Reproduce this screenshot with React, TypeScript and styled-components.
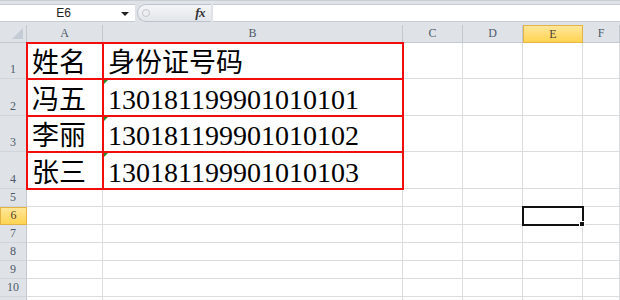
import React from "react";
import styled, { createGlobalStyle, css } from "styled-components";

const Global = createGlobalStyle`
  html, body { margin: 0; padding: 0; background: #fff; overflow: hidden; }
  #root { width: 620px; height: 300px; overflow: hidden; }
`;

const Window = styled.div`
  width: 620px;
  height: 300px;
  display: flex;
  flex-direction: column;
  overflow: hidden;
  font-family: "Liberation Sans", Arial, sans-serif;
`;

const FormulaBar = styled.div`
  height: 25px;
  box-sizing: border-box;
  padding: 3px 0 3px 0;
  background: #dfe3e8;
  border-top: 1px solid #c9ced5;
  display: flex;
  gap: 2px;
  align-items: stretch;
`;

const NameBox = styled.div`
  width: 135px;
  box-sizing: border-box;
  background: #fff;
  border-top: 1px solid #c6ccd4;
  border-bottom: 1px solid #c6ccd4;
  display: flex;
  align-items: center;
  padding: 0 6px 0 0;
`;

const NameText = styled.span`
  flex: 1;
  text-align: center;
  font-family: "Liberation Sans", Arial, sans-serif;
  font-size: 12px;
  color: #222;
  padding-left: 6px;
`;

const DropArrow = styled.span`
  width: 0;
  height: 0;
  border-left: 4px solid transparent;
  border-right: 4px solid transparent;
  border-top: 4px solid #222;
  margin-top: 1px;
`;

const FxPill = styled.div`
  width: 74px;
  box-sizing: border-box;
  border: 1px solid #bcc3cc;
  border-right: none;
  border-radius: 9px 0 0 9px;
  background: linear-gradient(#f4f5f7, #e3e6ea);
  display: flex;
  align-items: center;
  justify-content: space-between;
  padding: 0 6px 0 4px;
`;

const Grip = styled.span`
  width: 6px;
  height: 6px;
  border-radius: 50%;
  border: 1px solid #c3c8cf;
  background: #eceef1;
`;

const Fx = styled.span`
  font-family: "Liberation Serif", "Times New Roman", serif;
  font-style: italic;
  font-weight: bold;
  font-size: 13px;
  color: #333;
  letter-spacing: -0.5px;
`;

const FormulaInput = styled.div`
  flex: 1;
  background: #fff;
  border-top: 1px solid #c6ccd4;
  border-bottom: 1px solid #c6ccd4;
`;

const Sheet = styled.div`
  display: grid;
  grid-template-columns: 27px 76px 300px 60px 60px 60px 1fr;
  grid-template-rows: 18px 36px 37px 36px 37px repeat(7, 18px);
  background: #fff;
`;

const Corner = styled.div`
  background: #dfe3e8;
  border-right: 1px solid #c3c9d1;
  border-bottom: 1px solid #c3c9d1;
  box-sizing: border-box;
  display: flex;
  justify-content: flex-end;
  align-items: flex-end;
  padding: 0 3px 3px 0;
`;

const CornerTri = styled.span`
  width: 0;
  height: 0;
  border-left: 11px solid transparent;
  border-bottom: 11px solid #c5ccd5;
`;

const activeHeader = css`
  background: linear-gradient(#ffe69a, #ffd452);
  color: #4a4030;
  border: 1px solid #e3b445;
`;

const ColHead = styled.div<{ $active?: boolean }>`
  box-sizing: border-box;
  background: #dfe3e8;
  border-right: 1px solid #c3c9d1;
  border-bottom: 1px solid #c3c9d1;
  display: flex;
  align-items: center;
  justify-content: center;
  font-family: "Liberation Serif", "Times New Roman", serif;
  font-size: 12px;
  color: #4e5a69;
  ${(p) => p.$active && activeHeader}
`;

const RowHead = styled.div<{ $active?: boolean }>`
  box-sizing: border-box;
  background: #dfe3e8;
  border-right: 1px solid #c3c9d1;
  border-bottom: 1px solid #d0d5dc;
  display: flex;
  align-items: flex-end;
  justify-content: center;
  padding-bottom: 2px;
  font-family: "Liberation Serif", "Times New Roman", serif;
  font-size: 12px;
  line-height: 14px;
  color: #4e5a69;
  ${(p) => p.$active && activeHeader}
`;

const Cell = styled.div<{ $boxed?: boolean; $selected?: boolean; $flag?: boolean; $num?: boolean }>`
  position: relative;
  box-sizing: border-box;
  border-right: 1px solid #dadcdd;
  border-bottom: 1px solid #dadcdd;
  display: flex;
  align-items: flex-end;
  padding: 0 0 0 5px;
  font-family: "Liberation Serif", "Times New Roman", "Noto Sans CJK SC", serif;
  font-size: ${(p) => (p.$num ? "28px" : "27px")};
  line-height: 30px;
  color: #000;
  white-space: nowrap;
  ${(p) =>
    p.$boxed &&
    css`
      outline: 2px solid #f20d0d;
      outline-offset: -1px;
      z-index: 1;
    `}
  ${(p) =>
    p.$selected &&
    css`
      outline: 2px solid #111;
      outline-offset: -1px;
      z-index: 2;
      &::after {
        content: "";
        position: absolute;
        right: -3px;
        bottom: -3px;
        width: 4px;
        height: 4px;
        background: #111;
        border: 1px solid #fff;
      }
    `}
  ${(p) =>
    p.$flag &&
    css`
      &::before {
        content: "";
        position: absolute;
        left: 1px;
        top: 1px;
        width: 0;
        height: 0;
        border-top: 4px solid #2a8a2a;
        border-right: 4px solid transparent;
      }
    `}
`;

const cols = ["A", "B", "C", "D", "E", "F"];
const data: [string, string][] = [
  ["姓名", "身份证号码"],
  ["冯五", "130181199901010101"],
  ["李丽", "130181199901010102"],
  ["张三", "130181199901010103"],
];

export default function App() {
  const rows = [];
  for (let r = 1; r <= 11; r++) {
    const rowData = data[r - 1];
    rows.push(
      <React.Fragment key={r}>
        <RowHead $active={r === 6}>{r <= 10 ? r : ""}</RowHead>
        {cols.map((c, ci) => {
          const boxed = !!rowData && ci < 2;
          const text = rowData && ci < 2 ? rowData[ci] : "";
          return (
            <Cell
              key={c}
              $boxed={boxed}
              $selected={r === 6 && c === "E"}
              $flag={boxed && ci === 1 && r > 1}
              $num={boxed && ci === 1 && r > 1}
            >
              {text}
            </Cell>
          );
        })}
      </React.Fragment>
    );
  }
  return (
    <>
      <Global />
      <Window>
        <FormulaBar>
          <NameBox>
            <NameText>E6</NameText>
            <DropArrow />
          </NameBox>
          <FxPill>
            <Grip />
            <Fx>fx</Fx>
          </FxPill>
          <FormulaInput />
        </FormulaBar>
        <Sheet>
          <Corner>
            <CornerTri />
          </Corner>
          {cols.map((c) => (
            <ColHead key={c} $active={c === "E"}>
              {c}
            </ColHead>
          ))}
          {rows}
        </Sheet>
      </Window>
    </>
  );
}
